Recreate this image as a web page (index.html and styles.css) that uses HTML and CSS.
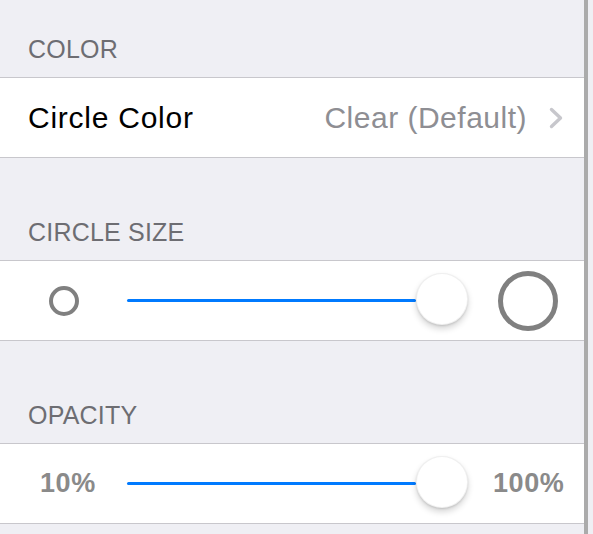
FILE: index.html
```html
<!DOCTYPE html>
<html>
<head>
<meta charset="utf-8">
<link rel="stylesheet" href="styles.css">
</head>
<body>
<div class="screen">
  <div class="pane">
    <div class="header header-first">COLOR</div>
    <div class="cell cell-nav">
      <span class="label">Circle Color</span>
      <span class="value">Clear (Default)</span>
      <svg class="chevron" width="15" height="22" viewBox="0 0 15 22"><path d="M2.5 2.5 L11.5 11 L2.5 19.5" fill="none" stroke="#c7c7cc" stroke-width="3.4" stroke-linecap="round" stroke-linejoin="round"/></svg>
    </div>

    <div class="header">CIRCLE SIZE</div>
    <div class="cell cell-slider">
      <div class="side-left size-left"><span class="ring ring-small"></span></div>
      <div class="slider">
        <div class="track"></div>
        <div class="thumb"></div>
      </div>
      <div class="side-right size-right"><span class="ring ring-big"></span></div>
    </div>

    <div class="header">OPACITY</div>
    <div class="cell cell-slider">
      <div class="side-left pct-left"><span class="pct">10%</span></div>
      <div class="slider">
        <div class="track"></div>
        <div class="thumb"></div>
      </div>
      <div class="side-right pct-right"><span class="pct">100%</span></div>
    </div>
  </div>
  <div class="divider"></div>
</div>
</body>
</html>
```

FILE: styles.css
```css
html, body {
  margin: 0;
  padding: 0;
  background: #efeff4;
}
body {
  font-family: "Liberation Sans", Arial, sans-serif;
  overflow: hidden;
}
.screen {
  display: flex;
  height: 534px;
  width: 593px;
}
.pane {
  width: 584px;
  display: flex;
  flex-direction: column;
}
.divider {
  width: 4px;
  background: #ababab;
}
.header {
  height: 102px;
  box-sizing: border-box;
  display: flex;
  align-items: flex-end;
  padding: 0 0 15px 28px;
  font-size: 25px;
  line-height: 25px;
  color: #6d6d72;
  letter-spacing: 0.2px;
}
.header-first {
  height: 77px;
}
.cell {
  background: #fff;
  border-top: 1px solid #c8c7cc;
  border-bottom: 1px solid #c8c7cc;
  height: 79px;
  display: flex;
  align-items: center;
}
.cell-nav {
  padding: 0 20px 0 28px;
}
.label {
  font-size: 30px;
  letter-spacing: 0.75px;
  color: #000;
  flex: 1;
}
.value {
  font-size: 30px;
  letter-spacing: 0.5px;
  color: #8e8e93;
  margin-right: 22px;
}
.chevron {
  display: block;
  margin-top: 1px;
}
.side-left {
  width: 127px;
  box-sizing: border-box;
  display: flex;
  align-items: center;
}
.size-left {
  padding-left: 49px;
}
.pct-left {
  padding-left: 40px;
}
.side-right {
  flex: 1;
  display: flex;
  align-items: center;
}
.size-right {
  padding-left: 30px;
}
.pct-right {
  padding-left: 25px;
}
.slider {
  width: 341px;
  display: flex;
  align-items: center;
}
.track {
  flex: 1;
  height: 3px;
  background: #007aff;
  border-radius: 2px;
}
.thumb {
  width: 52px;
  height: 52px;
  border-radius: 50%;
  background: #fff;
  box-sizing: border-box;
  border: 1px solid rgba(0, 0, 0, 0.06);
  box-shadow: 0 4px 6px rgba(0, 0, 0, 0.16), 0 1px 2px rgba(0, 0, 0, 0.12);
  margin-top: -3px;
}
.ring {
  display: block;
  border-radius: 50%;
  border-style: solid;
  border-color: #808080;
  box-sizing: border-box;
}
.ring-small {
  width: 30px;
  height: 30px;
  border-width: 4px;
}
.ring-big {
  width: 60px;
  height: 60px;
  border-width: 5px;
}
.pct {
  font-size: 27px;
  font-weight: bold;
  letter-spacing: 0.6px;
  color: #8a8a8a;
}
```
